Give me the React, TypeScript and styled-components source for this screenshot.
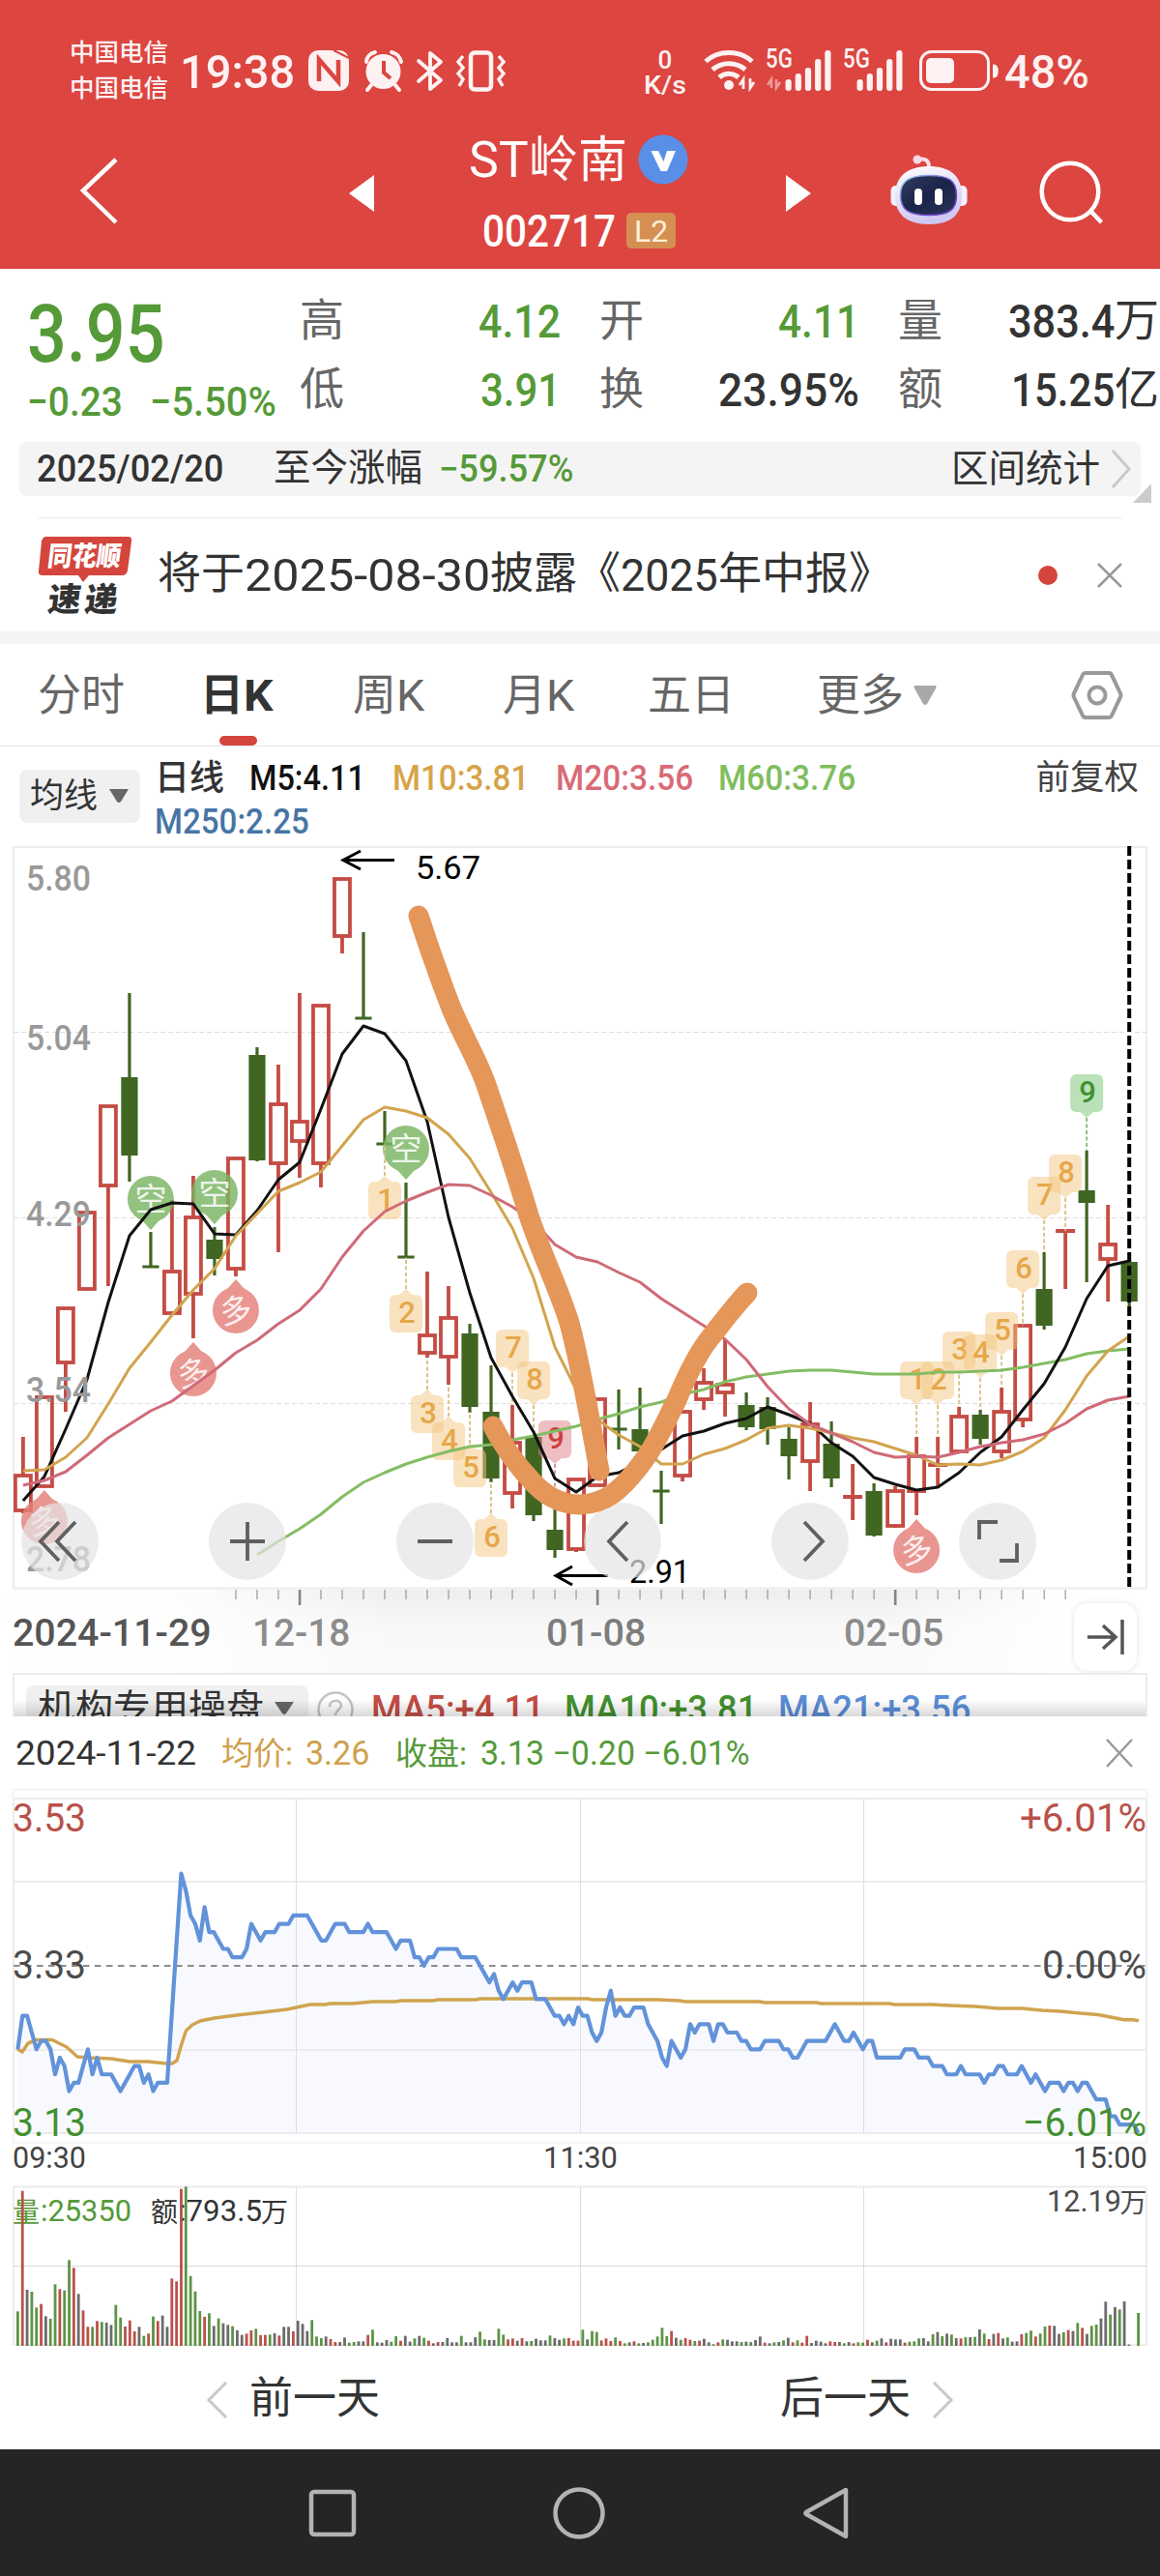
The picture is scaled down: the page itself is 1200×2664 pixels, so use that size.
/** @format */

import React, { useLayoutEffect, useRef, useState } from 'react';
import styled, { createGlobalStyle } from 'styled-components';

const RED = '#c44c44';
const GREEN = '#406622';
const UP = '#dc4540';
const DOWN = '#559a38';

/* ---------- daily K data ---------- */

const STEP = 22.005;
const kx = (i: number) => 23.9 + i * STEP;

// [colour, high, body top, body bottom, low]
type Candle = [string, number, number, number, number];

const candles: Candle[] = [
  ['r', 1486, 1526, 1562, 1565],
  ['r', 1445, 1445, 1537, 1537],
  ['r', 1353, 1353, 1409, 1460],
  ['r', 1254, 1254, 1333, 1335],
  ['r', 1144, 1144, 1226, 1330],
  ['g', 1027, 1114, 1195, 1221],
  ['g', 1274, 1310, 1310, 1310],
  ['r', 1241, 1315, 1358, 1358],
  ['r', 1216, 1259, 1338, 1384],
  ['g', 1269, 1282, 1302, 1318],
  ['r', 1198, 1198, 1312, 1320],
  ['g', 1083, 1091, 1200, 1200],
  ['r', 1101, 1142, 1203, 1295],
  ['r', 1027, 1160, 1180, 1218],
  ['r', 1040, 1040, 1203, 1228],
  ['r', 909, 909, 968, 986],
  ['g', 964, 1053, 1053, 1053],
  ['g', 1149, 1183, 1183, 1183],
  ['g', 1223, 1300, 1300, 1300],
  ['r', 1315, 1381, 1399, 1404],
  ['r', 1330, 1363, 1403, 1432],
  ['g', 1369, 1379, 1455, 1460],
  ['g', 1412, 1460, 1529, 1532],
  ['r', 1453, 1492, 1544, 1560],
  ['g', 1486, 1486, 1567, 1572],
  ['g', 1540, 1582, 1603, 1610],
  ['r', 1530, 1530, 1602, 1605],
  ['r', 1447, 1447, 1536, 1536],
  ['g', 1437, 1478, 1478, 1498],
  ['g', 1435, 1478, 1501, 1501],
  ['g', 1521, 1542, 1542, 1575],
  ['r', 1460, 1460, 1526, 1532],
  ['r', 1415, 1430, 1447, 1458],
  ['r', 1385, 1432, 1440, 1465],
  ['g', 1440, 1453, 1476, 1478],
  ['g', 1445, 1455, 1478, 1493],
  ['g', 1476, 1488, 1506, 1529],
  ['r', 1450, 1473, 1511, 1542],
  ['g', 1470, 1493, 1529, 1537],
  ['r', 1514, 1548, 1548, 1572],
  ['g', 1534, 1542, 1588, 1588],
  ['r', 1537, 1542, 1578, 1580],
  ['r', 1486, 1506, 1542, 1567],
  ['r', 1486, 1515, 1518, 1538],
  ['r', 1455, 1465, 1501, 1501],
  ['g', 1458, 1463, 1488, 1493],
  ['r', 1435, 1460, 1501, 1508],
  ['r', 1371, 1371, 1468, 1476],
  ['g', 1295, 1333, 1371, 1374],
  ['r', 1273, 1273, 1273, 1333],
  ['g', 1190, 1231, 1244, 1325],
  ['r', 1246, 1287, 1302, 1346],
  ['g', 1305, 1305, 1346, 1351],
];

const averages = [
  {
    color: '#84bd63',
    from: 11,
    ys: [1608, 1594, 1581, 1566, 1548, 1533, 1523, 1514, 1507, 1501, 1496, 1494, 1489, 1485, 1480, 1475, 1468, 1462, 1455, 1450, 1442, 1437, 1429, 1424, 1421, 1418, 1417, 1417, 1419, 1421, 1421, 1421, 1419, 1419, 1418, 1417, 1414, 1410, 1406, 1400, 1397, 1395],
  },
  {
    color: '#111',
    from: 0,
    ys: [1552, 1527, 1478, 1427, 1347, 1278, 1251, 1244, 1245, 1276, 1277, 1252, 1220, 1202, 1147, 1090, 1061, 1069, 1097, 1160, 1259, 1337, 1404, 1444, 1481, 1529, 1543, 1527, 1523, 1512, 1499, 1485, 1480, 1472, 1467, 1455, 1463, 1472, 1492, 1506, 1528, 1535, 1541, 1538, 1523, 1502, 1486, 1458, 1431, 1393, 1343, 1309, 1304],
  },
  {
    color: '#d2a44f',
    from: 0,
    ys: [1521, 1520, 1507, 1487, 1452, 1415, 1388, 1360, 1334, 1312, 1278, 1255, 1232, 1223, 1212, 1185, 1158, 1145, 1149, 1156, 1173, 1198, 1233, 1270, 1322, 1393, 1437, 1468, 1484, 1496, 1514, 1514, 1504, 1498, 1489, 1477, 1474, 1477, 1482, 1487, 1491, 1498, 1505, 1515, 1514, 1515, 1510, 1501, 1487, 1458, 1423, 1397, 1382],
  },
  {
    color: '#cf6a78',
    from: 0,
    ys: [1536, 1531, 1522, 1505, 1487, 1473, 1459, 1449, 1433, 1417, 1399, 1386, 1369, 1355, 1333, 1300, 1273, 1253, 1242, 1233, 1225, 1226, 1236, 1248, 1263, 1287, 1300, 1305, 1316, 1326, 1343, 1357, 1371, 1385, 1406, 1434, 1457, 1473, 1482, 1491, 1502, 1507, 1506, 1507, 1502, 1496, 1492, 1489, 1483, 1472, 1457, 1448, 1444],
  },
];

// [candle, top of box, digit, pointer side, dash end, tone]
type Tag = [number, number, string, 'up' | 'down', number, string];

const tags: Tag[] = [
  [17, 1222, '1', 'up', 1183, 'amber'],
  [18, 1339, '2', 'up', 1300, 'amber'],
  [19, 1443, '3', 'up', 1404, 'amber'],
  [20, 1471, '4', 'up', 1432, 'amber'],
  [21, 1499, '5', 'up', 1460, 'amber'],
  [22, 1571, '6', 'up', 1532, 'amber'],
  [23, 1375, '7', 'down', 1453, 'amber'],
  [24, 1408, '8', 'down', 1486, 'amber'],
  [25, 1469, '9', 'down', 1540, 'red'],
  [42, 1408, '1', 'down', 1486, 'amber'],
  [43, 1408, '2', 'down', 1486, 'amber'],
  [44, 1377, '3', 'down', 1455, 'amber'],
  [45, 1380, '4', 'down', 1458, 'amber'],
  [46, 1357, '5', 'down', 1435, 'amber'],
  [47, 1293, '6', 'down', 1371, 'amber'],
  [48, 1217, '7', 'down', 1295, 'amber'],
  [49, 1194, '8', 'down', 1273, 'amber'],
  [50, 1111, '9', 'down', 1190, 'green'],
];

const tones: { [k: string]: { box: string; text: string; dash: string } } = {
  amber: { box: '#f5c780', text: '#e6a74a', dash: '#dcc48a' },
  red: { box: '#dc8086', text: '#cc4040', dash: '#d09a9a' },
  green: { box: '#78c573', text: '#3f9130', dash: '#8cba82' },
};

// [candle, tip y, long?]
const bubbles: [number, number, boolean][] = [
  [6, 1272, false],
  [9, 1266, false],
  [18, 1220, false],
  [1, 1541, true],
  [8, 1388, true],
  [10, 1323, true],
  [42, 1571, true],
];

/* ---------- minute data: [minute, ticks below previous close] ---------- */

const ticks: [number, number][] = [
  [0, 10], [1, 6], [2, 6], [4, 10], [5, 9], [6, 9], [7, 10], [8, 13], [9, 11], [10, 12], [11, 15], [12, 14], [13, 14],
  [15, 10], [16, 13], [17, 11], [18, 13], [20, 13], [22, 15], [25, 12], [26, 12], [27, 14], [28, 13], [29, 15], [30, 14],
  [32, 14], [35, -11], [36, -9], [37, -6], [38, -5], [39, -3], [40, -7], [41, -4], [42, -4], [44, -2], [45, -2], [46, -1],
  [48, -1], [49, -2], [50, -5], [52, -3], [53, -4], [55, -4], [56, -5], [58, -5], [59, -6], [62, -6], [65, -3], [66, -3],
  [68, -5], [70, -5], [71, -4], [74, -4], [75, -5], [76, -4], [79, -4], [81, -2], [82, -3], [84, -3], [85, -1], [86, -1],
  [87, 0], [88, -1], [89, -1], [90, -2], [94, -2], [95, -1], [98, -1], [101, 2], [102, 1], [103, 3], [104, 4], [106, 2],
  [107, 3], [108, 2], [110, 2], [111, 4], [113, 4], [115, 6], [116, 6], [117, 7], [118, 6], [119, 7], [120, 5], [121, 6],
  [122, 6], [123, 8], [124, 9], [125, 8], [126, 5], [127, 3], [128, 6], [129, 5], [130, 6], [131, 6], [132, 5], [134, 5],
  [135, 7], [137, 9], [138, 11], [139, 12], [140, 9], [142, 11], [143, 10], [144, 7], [145, 8], [146, 7], [148, 7], [149, 9],
  [150, 7], [151, 7], [152, 8], [154, 8], [155, 9], [156, 9], [157, 10], [159, 10], [160, 9], [163, 9], [164, 10], [165, 10],
  [166, 11], [167, 11], [169, 9], [173, 9], [175, 7], [177, 9], [178, 9], [179, 8], [181, 10], [182, 9], [183, 9], [184, 11],
  [189, 11], [190, 10], [192, 10], [193, 11], [195, 11], [196, 12], [198, 12], [199, 13], [201, 13], [202, 12], [203, 13],
  [206, 13], [207, 14], [208, 13], [209, 13], [210, 12], [211, 12], [212, 13], [214, 13], [215, 12], [217, 14], [218, 13],
  [220, 15], [221, 14], [223, 14], [224, 15], [225, 14], [226, 14], [227, 15], [228, 14], [229, 14], [231, 16], [233, 16],
  [234, 18], [235, 18], [236, 19], [239, 19], [240, 20],
];

const avgLine =
  '18,2119 23,2122 29,2113 38,2109.5 54,2109.5 69,2117 80,2127 92,2128 115,2129 134,2132 153,2132 172,2134 178,2134 183,2131 187.5,2115 192.5,2100 199,2094 207,2090 222,2087 245,2084 272,2081 297,2078 321,2073 337,2073 341,2072 365,2072 386,2070 409,2070 415,2069 448,2069 453,2068 492,2068 497,2067 608,2067 613,2068 680,2068 703,2069 709,2070 786,2070 791,2071 845,2071 849,2072 920,2072 925,2073 964,2073 983,2074 1009,2075 1032,2077 1057,2077 1078,2079 1097,2080 1117,2082 1136,2083.5 1163,2088.7 1172,2088.7 1178,2089.7';

const mx = (m: number) => 18.4 + m * 4.83;
const my = (t: number) => 2032.8 + t * 8.65;

// one entry a minute from 09:30: colour and top of the bar on a 557-unit scale
const volumes =
  'g450 r76 d383 g389 g438 r427 d465 g473 g366 r381 g385 g291 r315 d396 r447 r498 g498 r480 g483 d485 d492 g430 g469 r497 r478 r512 d498 g526 r519 g466 r480 d463 d498 r348 r357 r70 g63 g340 g388 g449 r467 g456 d495 g472 d487 d492 g496 d509 d523 r519 r509 g504 r524 r523 g522 d518 r525 d498 d498 r512 d479 d489 d511 g477 g528 g533 d528 r536 r545 d545 d531 g547 g545 d543 d543 r523 g507 d546 d547 d539 g544 g527 r541 d526 d544 g534 d526 g532 r541 d549 r545 d545 d533 d546 d546 g526 d546 d546 d530 g513 g537 d539 d539 g504 g522 r537 r534 d541 r533 d543 g542 d535 d540 d540 g525 d533 d538 g534 r533 r541 r541 g507 d537 g511 g514 r540 r534 r542 g531 r542 g549 d546 r543 g549 d548 g546 g538 g528 g501 g527 r511 d532 g538 r533 r538 g542 r541 d535 d546 g552 r546 g537 d538 d543 d543 g545 d544 g545 d539 d528 r547 d549 g546 d545 g540 d532 r546 g540 r547 r526 d548 d541 d544 d549 r543 r545 d545 g549 d545 r549 g546 g547 r538 d546 g541 d534 r546 d535 d537 d537 r547 g544 g543 g534 d533 d543 g521 d514 g527 d519 g522 d533 r534 g530 d530 g529 d506 g519 r536 d520 r517 d534 g531 d544 d543 r521 g517 g510 r528 g519 g497 r494 d495 d520 g515 r508 d511 g486 r501 d520 g495 g491 d472 d420 g460 d437 g444 d419 d553 n557 g455';

const volumeColors: { [k: string]: string } = { r: '#b9514a', g: '#5d9446', d: '#6b6b6b', n: 'none' };

/* ---------- text squeezed to the narrow numerals of the app ---------- */

interface IFit {
  w: number;
  children: React.ReactNode;
}

const Fit = ({ w, children }: IFit) => {
  const ref = useRef<HTMLSpanElement>(null);
  const [scale, setScale] = useState(1);

  useLayoutEffect(() => {
    if (ref.current) setScale(w / ref.current.offsetWidth);
  }, [w]);

  return (
    <FitBox $w={w}>
      <FitText ref={ref} style={{ transform: `scaleX(${scale})` }}>
        {children}
      </FitText>
    </FitBox>
  );
};

/* ---------- header ---------- */

const StatusIcons = () => (
  <svg width="210" height="46" viewBox="318 50 210 46" fill="none">
    <rect x="320" y="52" width="42" height="42" rx="10" fill="#fdf1f1" />
    <path d="M331 84V61.5L351 84.5V62" stroke={UP} strokeWidth="4.5" />
    <path d="M322 94L326 94M346 52L362 60" stroke={UP} strokeWidth="2" />
    <circle cx="397.500" cy="74" r="18" fill="#fdf1f1" />
    <path d="M398 63V75L405 81" stroke={UP} strokeWidth="4" />
    <path d="M380 64C380 59 384 55 389 54M406 54C411 55 415 59 416 64M385 88L381 93M410 88L414 93" stroke="#fdf1f1" strokeWidth="4" strokeLinecap="round" />
    <path d="M434 63L457 83L446 92V55L457 64L434 84" stroke="#fdf1f1" strokeWidth="3.800" strokeLinejoin="round" strokeLinecap="round" />
    <rect x="488" y="54.500" width="21" height="38" rx="4" stroke="#fdf1f1" strokeWidth="4.500" />
    <path d="M480 58L475 64L480 70L475 76L480 82L476 89M517 58L522 64L517 70L522 76L517 82L521 89" stroke="#fdf1f1" strokeWidth="3.500" />
  </svg>
);

const WifiIcon = () => (
  <svg width="56" height="44" viewBox="728 51 56 44" fill="none" stroke="#fdf1f1" strokeWidth="5">
    <path d="M731 63.500C744 51.500 766 51.500 779 63.500M738 72C748 63.500 762 63.500 772 72M745 80C751 75 759 75 765 80" />
    <circle cx="755" cy="88" r="5" fill="#fdf1f1" stroke="none" />
    <path d="M770 92V82L766 88M777 81V91L781 85" strokeWidth="2.800" />
  </svg>
);

const Signal = ({ faded }: { faded?: boolean }) => (
  <SignalBox>
    <SignalLabel>
      <Fit w={28}>5G</Fit>
    </SignalLabel>
    <svg width="70" height="44" viewBox="0 0 70 44">
      {faded && <path d="M6 40V31L2 37M11 31V40L15 34" stroke="#fdf1f1" strokeWidth="2.500" opacity="0.5" fill="none" />}
      {[12, 18, 24, 33, 42].map((h, i) => (
        <rect key={h} x={(faded ? 20.5 : 14.5) + i * 10.2} y={43 - h} width="6.200" height={h} rx="3" fill="#fdf1f1" />
      ))}
    </svg>
  </SignalBox>
);

const Battery = () => (
  <svg width="84" height="44" viewBox="951 51 84 44" fill="none">
    <rect x="953.500" y="53.500" width="70" height="39" rx="11" stroke="#fdf1f1" strokeWidth="3" />
    <rect x="959" y="60" width="29" height="26" rx="5" fill="#fdf1f1" />
    <path d="M1029 67.500C1034 68 1034 79 1029 79.500Z" fill="#fdf1f1" stroke="#fdf1f1" strokeWidth="2" />
  </svg>
);

const Robot = () => (
  <svg width="80" height="74" viewBox="0 0 80 74">
    <defs>
      <linearGradient id="shell" x1="0" y1="0" x2="0.300" y2="1">
        <stop offset="0" stopColor="#fff" />
        <stop offset="1" stopColor="#cfc8f2" />
      </linearGradient>
      <linearGradient id="visor" x1="0" y1="0" x2="1" y2="1">
        <stop offset="0" stopColor="#333d60" />
        <stop offset="0.500" stopColor="#1a2448" />
        <stop offset="1" stopColor="#2c3558" />
      </linearGradient>
      <linearGradient id="rim" x1="0" y1="0" x2="1" y2="1">
        <stop offset="0" stopColor="#9adcf6" />
        <stop offset="0.500" stopColor="#7a58d0" />
        <stop offset="1" stopColor="#6e3ac8" />
      </linearGradient>
    </defs>
    <path d="M29 6C36 4 40 7 40 14" stroke="#fbdfe6" strokeWidth="4" fill="none" />
    <circle cx="28" cy="6" r="4.500" fill="#f9d9e6" />
    <rect x="0.500" y="33" width="12" height="21" rx="5" fill="#f6eefc" />
    <rect x="67.500" y="33" width="12" height="21" rx="5" fill="#f6eefc" />
    <path d="M40 13C62 13 74 23 74 43C74 62 64 73 40 73C16 73 5 62 5 43C5 23 18 13 40 13Z" fill="url(#shell)" />
    <path d="M40 22.500C61 22.500 68.500 28 68.500 43C68.500 58 61 63.500 40 63.500C19 63.500 10.500 58 10.500 43C10.500 28 19 22.500 40 22.500Z" fill="url(#visor)" stroke="url(#rim)" strokeWidth="1.500" />
    <rect x="25" y="36" width="8" height="17" rx="3.800" fill="#fff" />
    <rect x="46" y="36" width="8" height="17" rx="3.800" fill="#fff" />
  </svg>
);

const Header = () => (
  <HeaderBox>
    <StatusBar>
      <Carriers>
        <span>中国电信</span>
        <span>中国电信</span>
      </Carriers>
      <Clock>
        <Fit w={119}>19:38</Fit>
      </Clock>
      <StatusIcons />
      <Speed>
        <Fit w={15}>0</Fit>
        <Fit w={44}>K/s</Fit>
      </Speed>
      <WifiIcon />
      <Signal faded />
      <Signal />
      <BatterySlot>
        <Battery />
      </BatterySlot>
      <Percent>
        <Fit w={88}>48%</Fit>
      </Percent>
    </StatusBar>
    <NavBar>
      <svg width="44" height="74" viewBox="0 0 44 74" fill="none">
        <path d="M39 5L5 37L39 70" stroke="#fff" strokeWidth="4.500" />
      </svg>
      <PrevStock width="26" height="38" viewBox="0 0 26 38">
        <path d="M26 0V38L0 19Z" fill="#fff" />
      </PrevStock>
      <TitleBlock>
        <Title>
          <Fit w={62}>ST</Fit>
          <span>岭南</span>
          <Verified width="52" height="52" viewBox="0 0 52 52">
            <circle cx="26" cy="26" r="25.500" fill="#5a8fe8" />
            <path d="M13.500 17H21L26.500 28L30 17H39L30 38H23.500Z" fill="#fff" />
          </Verified>
        </Title>
        <Code>
          <Fit w={138}>002717</Fit>
          <Level>
            <Fit w={35}>L2</Fit>
          </Level>
        </Code>
      </TitleBlock>
      <NextStock width="26" height="38" viewBox="0 0 26 38">
        <path d="M0 0V38L26 19Z" fill="#fff" />
      </NextStock>
      <RobotSlot>
        <Robot />
      </RobotSlot>
      <svg width="70" height="70" viewBox="0 0 70 70" fill="none" stroke="#fff">
        <circle cx="34" cy="33" r="29.300" strokeWidth="4.500" />
        <path d="M55 53L66.500 65" strokeWidth="4.500" />
      </svg>
    </NavBar>
  </HeaderBox>
);

/* ---------- quote ---------- */

const Quote = () => (
  <QuoteBox>
    <PriceCol>
      <Price>
        <Fit w={143}>3.95</Fit>
      </Price>
      <Change>
        <Fit w={99}>−0.23</Fit>
        <Fit w={131}>−5.50%</Fit>
      </Change>
    </PriceCol>
    <PairCol $w={269}>
      <Pair $color={DOWN}>
        <label>高</label>
        <Fit w={85}>4.12</Fit>
      </Pair>
      <Pair $color={DOWN}>
        <label>低</label>
        <Fit w={83}>3.91</Fit>
      </Pair>
    </PairCol>
    <PairCol $w={268}>
      <Pair $color={DOWN}>
        <label>开</label>
        <Fit w={84}>4.11</Fit>
      </Pair>
      <Pair $color="#333">
        <label>换</label>
        <Fit w={146}>23.95%</Fit>
      </Pair>
    </PairCol>
    <PairCol $w={269}>
      <Pair $color="#333">
        <label>量</label>
        <Fit w={110}>383.4</Fit>
        <b>万</b>
      </Pair>
      <Pair $color="#333">
        <label>额</label>
        <Fit w={107}>15.25</Fit>
        <b>亿</b>
      </Pair>
    </PairCol>
  </QuoteBox>
);

const SinceBar = () => (
  <Since>
    <Fit w={193}>2025/02/20</Fit>
    <SinceLabel>至今涨幅</SinceLabel>
    <SinceValue>
      <Fit w={139}>−59.57%</Fit>
    </SinceValue>
    <SinceLink>区间统计</SinceLink>
    <svg width="24" height="42" viewBox="0 0 24 42" fill="none">
      <path d="M3 2L20 21L3 40" stroke="#c9c9c9" strokeWidth="3" />
    </svg>
    <Corner />
  </Since>
);

const News = () => (
  <NewsRow>
    <NewsLogo width="98" height="82" viewBox="0 0 98 82">
      <path d="M9 1H93Q98 1 97 6L93 36Q92 41 87 41H53L47 48L42 41H5Q0 41 1 36L4 6Q5 1 9 1Z" fill="#d4453d" />
      <g transform="skewX(-7)" fontFamily="'Noto Sans CJK SC', sans-serif" fontWeight="900">
        <text x="13" y="31" fontSize="28" fill="#fff" textLength="76" lengthAdjust="spacingAndGlyphs">同花顺</text>
        <text x="19" y="78" fontSize="34" fill="#333" textLength="72" lengthAdjust="spacing">速递</text>
      </g>
    </NewsLogo>
    <NewsText>
      <span>将于</span>
      <Fit w={254}>2025-08-30</Fit>
      <span>披露《</span>
      <Fit w={101}>2025</Fit>
      <span>年中报》</span>
    </NewsText>
    <Dot />
    <svg width="28" height="28" viewBox="0 0 28 28">
      <path d="M2 2L26 26M26 2L2 26" stroke="#999" strokeWidth="2.500" />
    </svg>
  </NewsRow>
);

const Tabs = () => (
  <TabBar>
    <Tab $w={168}>分时</Tab>
    <Tab $w={158} $active>
      日<Fit w={31}>K</Fit>
    </Tab>
    <Tab $w={155}>
      周<Fit w={29}>K</Fit>
    </Tab>
    <Tab $w={150}>
      月<Fit w={29}>K</Fit>
    </Tab>
    <Tab $w={175}>五日</Tab>
    <Tab $w={128}>
      更多
      <svg width="26" height="22" viewBox="0 0 26 22">
        <path d="M2 1H24Q25 2 24 4L15 20Q13 22 11 20L2 4Q1 2 2 1Z" fill="#a8a8a8" />
      </svg>
    </Tab>
    <Gear width="54" height="52" viewBox="0 0 54 52" fill="none" stroke="#999" strokeWidth="4">
      <path d="M15 3H39Q41 3 42 5L51 24Q52 26 51 28L42 47Q41 49 39 49H15Q13 49 12 47L3 28Q2 26 3 24L12 5Q13 3 15 3Z" />
      <circle cx="27" cy="26" r="8.500" />
    </Gear>
  </TabBar>
);

const Legend = () => (
  <LegendBar>
    <Picker>
      均线
      <svg width="20" height="15" viewBox="0 0 20 15">
        <path d="M0 0H20L12 13Q10 15 8 13Z" fill="#666" />
      </svg>
    </Picker>
    <LegendItems>
      <LegendRow>
        <LegendText $color="#333" $gap={26}>日线</LegendText>
        <LegendText $color="#111" $gap={28}>
          <Fit w={120}>M5:4.11</Fit>
        </LegendText>
        <LegendText $color="#d6a449" $gap={28}>
          <Fit w={141}>M10:3.81</Fit>
        </LegendText>
        <LegendText $color="#d96a76" $gap={26}>
          <Fit w={142}>M20:3.56</Fit>
        </LegendText>
        <LegendText $color="#80bd5e" $gap={0}>
          <Fit w={142}>M60:3.76</Fit>
        </LegendText>
      </LegendRow>
      <LegendRow>
        <LegendText $color="#4675a5" $gap={0}>
          <Fit w={160}>M250:2.25</Fit>
        </LegendText>
      </LegendRow>
    </LegendItems>
    <Adjust>前复权</Adjust>
  </LegendBar>
);

/* ---------- daily K chart ---------- */

const CandleMark = ({ c, i }: { c: Candle; i: number }) => {
  const [kind, high, top, bottom, low] = c;
  const x = kx(i);
  const flat = bottom - top < 5;

  if (kind === 'g') {
    return (
      <g fill={GREEN}>
        <rect x={x - 1.6} y={high} width="3.200" height={low - high + 1} />
        <rect x={x - 8.6} y={flat ? top - 1.5 : top} width="17.200" height={flat ? 3 : bottom - top} />
      </g>
    );
  }
  return (
    <g stroke={RED} strokeWidth="3.800" fill="none">
      <path d={`M${x} ${high}V${top}M${x} ${bottom}V${low}`} />
      {flat ? <path d={`M${x - 10} ${top}H${x + 10}`} strokeWidth="4" /> : <rect x={x - 8} y={top} width="16" height={bottom - top} />}
    </g>
  );
};

const TagMark = ({ t }: { t: Tag }) => {
  const [i, y, digit, side, end, tone] = t;
  const x = kx(i);
  const c = tones[tone];
  const tip = side === 'up' ? `M${x - 7} ${y}L${x} ${y - 6}L${x + 7} ${y}Z` : `M${x - 7} ${y + 39}L${x} ${y + 45}L${x + 7} ${y + 39}Z`;
  const from = side === 'up' ? y - 6 : y + 45;

  return (
    <g>
      <path d={`M${x} ${from}V${end}`} stroke={c.dash} strokeWidth="2" strokeDasharray="4 2.500" />
      <g fill={c.box} opacity="0.5">
        <rect x={x - 17} y={y} width="34" height="39" rx="6" />
        <path d={tip} />
      </g>
      <text x={x + 1} y={y + 29} fontSize="31" fontWeight="500" fill={c.text} textAnchor="middle">
        {digit}
      </text>
    </g>
  );
};

const Bubble = ({ i, tip, long }: { i: number; tip: number; long: boolean }) => {
  const x = kx(i);
  const s = long ? 1 : -1;
  const cy = tip + s * 32;

  return (
    <g>
      <g fill={long ? '#e57f7a' : '#7ab562'} opacity="0.82">
        <circle cx={x} cy={cy} r="24" />
        <path d={`M${x} ${tip}L${x + 9} ${cy - s * 22}H${x - 9}Z`} />
      </g>
      <text x={x} y={cy + 12} fontSize="33" fill="#fff" opacity="0.85" textAnchor="middle" transform={`rotate(${long ? -10 : 0} ${x} ${cy})`}>
        {long ? '多' : '空'}
      </text>
    </g>
  );
};

const scaleLabels: [string, number][] = [
  ['5.80', 921],
  ['5.04', 1086],
  ['4.29', 1268],
  ['3.54', 1450],
  ['2.78', 1625],
];

const KChart = () => (
  <KBox>
    <Plot width="1200" height="769" viewBox="0 875 1200 769" fill="none">
      <rect x="14" y="876" width="1172" height="766.500" stroke="#ececec" strokeWidth="2" />
      <path d="M14 1067.500H1186M14 1259.500H1186M14 1451.500H1186" stroke="#dedede" strokeDasharray="5 3" />
      {candles.map((c, i) => (
        <CandleMark key={i} c={c} i={i} />
      ))}
      {bubbles.map(([i, tip, long]) => (
        <Bubble key={i} i={i} tip={tip} long={long} />
      ))}
      {tags.map(t => (
        <TagMark key={t[0]} t={t} />
      ))}
      {averages.map(a => (
        <polyline key={a.color} points={a.ys.map((y, n) => `${kx(a.from + n)},${y}`).join(' ')} stroke={a.color} strokeWidth="3" strokeLinejoin="round" />
      ))}
      {scaleLabels.map(([text, y]) => (
        <text key={text} x="27" y={y} fontSize="37.500" fontWeight="500" fill="#999" textLength="67" lengthAdjust="spacingAndGlyphs">
          {text}
        </text>
      ))}
      <path d="M408 889.500H356M373 880L355 889.500L373 899M629 1629.500H576M592 1620L575 1629.500L592 1639" stroke="#000" strokeWidth="3" />
      <text x="430" y="909" fontSize="33.500" fill="#000" textLength="67" lengthAdjust="spacingAndGlyphs">5.67</text>
      <text x="651" y="1637" fontSize="33.500" fill="#000" textLength="63" lengthAdjust="spacingAndGlyphs">2.91</text>
      <path d="M1168.200 875V1642" stroke="#000" strokeWidth="4" strokeDasharray="10 4" />
    </Plot>
    <Controls>
      {[
        'M39 20L20 40L39 60M56 20L37 40L56 60',
        'M22 40H58M40 20V60',
        'M22 40H58',
        'M45 20L26 40L45 60',
        'M34 20L53 40L34 60',
        'M21 38V20H40M60 42V60H42',
      ].map(d => (
        <Control key={d}>
          <svg width="80" height="80" viewBox="0 0 80 80" fill="none">
            <path d={d} stroke="#606060" strokeWidth="3.800" />
          </svg>
        </Control>
      ))}
    </Controls>
    <Scribble width="1200" height="769" viewBox="0 875 1200 769" fill="none">
      <g stroke="#e59659" strokeWidth="21" strokeLinecap="round" strokeLinejoin="round">
        <path d="M433 947C443 978 455 1012 467 1043C482 1078 494 1096 503 1122C517 1163 532 1207 547 1257C561 1299 577 1330 589 1368C600 1408 609 1462 620 1521" />
        <path d="M510 1475C524 1502 536 1516 547 1528C564 1549 582 1556 600 1556C625 1555 642 1544 669 1506C682 1487 692 1463 700 1448C712 1419 722 1399 735 1383C750 1364 762 1348 773 1337" />
      </g>
    </Scribble>
  </KBox>
);

const Axis = () => (
  <AxisBox>
    <svg width="1200" height="18" viewBox="0 0 1200 18">
      {Array.from({ length: 40 }, (_, n) => n + 10).map(i => (
        <rect key={i} x={kx(i) - ([13, 27, 41].includes(i) ? 1.2 : 0.5)} y="0" width={[13, 27, 41].includes(i) ? 2.6 : 1} height={[13, 27, 41].includes(i) ? 16 : 10} fill="#858585" />
      ))}
    </svg>
    <AxisRow>
      <AxisDate $w={248} $color="#555">
        <Fit w={206}>2024-11-29</Fit>
      </AxisDate>
      <AxisDate $w={304} $color="#8c8c8c">
        <Fit w={101}>12-18</Fit>
      </AxisDate>
      <AxisDate $w={308} $color="#7d7d7d">
        <Fit w={103}>01-08</Fit>
      </AxisDate>
      <AxisDate $w={238} $color="#8c8c8c">
        <Fit w={103}>02-05</Fit>
      </AxisDate>
      <LatestButton>
        <svg width="42" height="40" viewBox="0 0 42 40" fill="none">
          <path d="M2 20H31M18 8L31 20L18 32" stroke="#555" strokeWidth="3.500" />
          <path d="M38 2V38" stroke="#555" strokeWidth="3.500" />
        </svg>
      </LatestButton>
    </AxisRow>
  </AxisBox>
);

const Indicator = () => (
  <IndicatorBox>
    <IndicatorPicker>
      机构专用操盘
      <svg width="20" height="14" viewBox="0 0 20 14">
        <path d="M0 0H20L12 12Q10 14 8 12Z" fill="#666" />
      </svg>
    </IndicatorPicker>
    <Help width="40" height="40" viewBox="0 0 40 40" fill="none" stroke="#c4c4c4" strokeWidth="2.500">
      <circle cx="20" cy="20" r="17.500" />
      <path d="M14 17C14 9 26 9 26 16C26 20 20 20 20 26M20 29V32" />
    </Help>
    <IndicatorText $color="#c44c44" $gap={21}>
      <Fit w={179}>MA5:+4.11</Fit>
    </IndicatorText>
    <IndicatorText $color="#43902f" $gap={22}>
      <Fit w={199}>MA10:+3.81</Fit>
    </IndicatorText>
    <IndicatorText $color="#5a8dd8" $gap={0}>
      <Fit w={199}>MA21:+3.56</Fit>
    </IndicatorText>
    <Fade />
  </IndicatorBox>
);

/* ---------- one day sheet ---------- */

const linePath = ticks.map(([m, t]) => `${mx(m)},${my(t)}`).join(' ');

const DaySheet = () => (
  <Sheet>
    <SheetHead>
      <SheetText $color="#333" $gap={26}>
        <Fit w={187}>2024-11-22</Fit>
      </SheetText>
      <SheetLabel $color="#d0a04c" $gap={13}>
        均价:
      </SheetLabel>
      <SheetText $color="#d0a04c" $gap={27}>
        <Fit w={66}>3.26</Fit>
      </SheetText>
      <SheetLabel $color={DOWN} $gap={14}>
        收盘:
      </SheetLabel>
      <SheetText $color={DOWN} $gap={0}>
        <Fit w={279}>3.13 −0.20 −6.01%</Fit>
      </SheetText>
      <Close width="30" height="34" viewBox="0 0 30 34">
        <path d="M2 3L28 31M28 3L2 31" stroke="#999" strokeWidth="2.500" />
      </Close>
    </SheetHead>
    <Plot width="1200" height="404" viewBox="0 1846 1200 404" fill="none" fontSize="40">
      <path d="M13.500 1860V1850.500H1186.500V1860M13.500 2207V2216H1186.500V2207" stroke="#f4f4f4" strokeWidth="2" />
      <polygon points={`${mx(0)},2206 ${linePath} ${mx(240)},2206`} fill="#f7f9fe" />
      <path d="M14 1860H1186M14 1946H1186M14 2120H1186M14 2206H1186M14 1860V2206M1186 1860V2206" stroke="#ececee" strokeWidth="2" />
      <path d="M306.500 1860V2206M600.500 1860V2206M893.500 1860V2206" stroke="#dfdfe1" />
      <path d="M14 2033H1186" stroke="#8c8c8c" strokeWidth="2" strokeDasharray="6.500 5.500" />
      <polyline points={avgLine} stroke="#d0a44f" strokeWidth="3.500" strokeLinejoin="round" />
      <polyline points={linePath} stroke="#6293da" strokeWidth="4.200" strokeLinejoin="round" />
      <text x="13" y="1893.500" fill="#b9514a" textLength="76" lengthAdjust="spacingAndGlyphs">3.53</text>
      <text x="13" y="2046" fill="#4c4c4c" textLength="76" lengthAdjust="spacingAndGlyphs">3.33</text>
      <text x="13" y="2208.500" fill="#43902f" textLength="76" lengthAdjust="spacingAndGlyphs">3.13</text>
      <text x="1055" y="1893.500" fill="#b9514a" textLength="131" lengthAdjust="spacingAndGlyphs">+6.01%</text>
      <text x="1078" y="2046" fill="#4c4c4c" textLength="108" lengthAdjust="spacingAndGlyphs">0.00%</text>
      <text x="1058" y="2208.500" fill="#43902f" textLength="128" lengthAdjust="spacingAndGlyphs">−6.01%</text>
      <g fontSize="31" fill="#444">
        <text x="13" y="2242" textLength="76" lengthAdjust="spacingAndGlyphs">09:30</text>
        <text x="562" y="2242" textLength="77" lengthAdjust="spacingAndGlyphs">11:30</text>
        <text x="1110" y="2242" textLength="77" lengthAdjust="spacingAndGlyphs">15:00</text>
      </g>
    </Plot>
    <Plot width="1200" height="176" viewBox="0 2250 1200 176" fill="none">
      <path d="M14 2261.500H1186M14 2261V2426M1186 2261V2426M14 2425H1186" stroke="#ececec" strokeWidth="2" />
      <path d="M306.500 2261V2426M600.500 2261V2426M893.500 2261V2426M14 2343.500H1186" stroke="#dcdcdc" />
      <g fontSize="31">
        <text x="13" y="2298" fontSize="28" fill={DOWN}>量</text>
        <text x="42" y="2297" fill={DOWN} textLength="94" lengthAdjust="spacingAndGlyphs">:25350</text>
        <text x="156" y="2298" fontSize="28" fill="#333">额</text>
        <text x="185" y="2297" fill="#333" textLength="86" lengthAdjust="spacingAndGlyphs">:793.5</text>
        <text x="270" y="2298" fontSize="28" fill="#333">万</text>
        <text x="1083" y="2287" fill="#4c4c4c" textLength="77" lengthAdjust="spacingAndGlyphs">12.19</text>
        <text x="1158.500" y="2288" fontSize="28" fill="#4c4c4c">万</text>
      </g>
      {volumes.split(' ').map((v, m) => {
        const h = (557 - Number(v.slice(1))) / 3;
        return <rect key={m} x={mx(m) - 1.4} y={2426 - h} width="2.800" height={h} fill={volumeColors[v[0]]} />;
      })}
    </Plot>
    <Pager>
      <PageLink>
        <svg width="24" height="40" viewBox="0 0 24 40" fill="none">
          <path d="M21 2L3 20L21 38" stroke="#c8c8c8" strokeWidth="3" />
        </svg>
        <span>前一天</span>
      </PageLink>
      <PageLink>
        <span>后一天</span>
        <svg width="24" height="40" viewBox="0 0 24 40" fill="none">
          <path d="M3 2L21 20L3 38" stroke="#c8c8c8" strokeWidth="3" />
        </svg>
      </PageLink>
    </Pager>
  </Sheet>
);

const SystemBar = () => (
  <SystemBox>
    <svg width="52" height="56" viewBox="0 0 52 56" fill="none" stroke="#b3b3b3" strokeWidth="4.500">
      <rect x="5" y="6" width="44" height="44" rx="3" />
    </svg>
    <svg width="56" height="56" viewBox="0 0 56 56" fill="none" stroke="#b3b3b3" strokeWidth="4.500">
      <circle cx="28" cy="28" r="24.500" />
    </svg>
    <svg width="52" height="56" viewBox="0 0 52 56" fill="none" stroke="#b3b3b3" strokeWidth="4.500" strokeLinejoin="round">
      <path d="M46 4V52L5 29Q4 28 5 27Z" />
    </svg>
  </SystemBox>
);

const App = () => (
  <>
    <Global />
    <Screen>
      <Header />
      <Quote />
      <SinceBar />
      <Rule />
      <News />
      <Strip />
      <Tabs />
      <Legend />
      <KChart />
      <Axis />
      <Indicator />
      <DaySheet />
      <SystemBar />
    </Screen>
  </>
);

const Global = createGlobalStyle`
  * {
    box-sizing: border-box;
  }
  body {
    margin: 0;
    background: #fff;
    font-family: Roboto, 'Noto Sans CJK SC', sans-serif;
  }
  svg {
    display: block;
    flex: none;
  }
`;

const Screen = styled.div`
  width: 1200px;
  height: 2664px;
  overflow: hidden;
  background: #fff;
  line-height: 1;
  white-space: nowrap;
`;

const FitBox = styled.span<{ $w: number }>`
  display: block;
  flex: none;
  width: ${p => p.$w}px;
`;

const FitText = styled.span`
  display: inline-block;
  white-space: pre;
  transform-origin: left center;
`;

const HeaderBox = styled.header`
  height: 278px;
  background: ${UP};
  color: #fff;
`;

const StatusBar = styled.div`
  display: flex;
  align-items: center;
  height: 130px;
  padding: 16px 0 0 72px;
  color: #fdf1f1;
  font-weight: 500;
`;

const Carriers = styled.div`
  display: flex;
  flex-direction: column;
  justify-content: space-between;
  width: 114px;
  height: 63px;
  font-size: 25.500px;
`;

const Clock = styled.div`
  width: 131px;
  padding-top: 2px;
  font-size: 49px;
`;

const Speed = styled.div`
  display: flex;
  flex-direction: column;
  align-items: center;
  justify-content: space-between;
  width: 44px;
  height: 49px;
  margin: 0 17px 0 139px;
  font-size: 26px;
`;

const SignalBox = styled.div`
  display: flex;
  position: relative;
  width: 70px;
  margin-left: 9px;

  & + & {
    margin-left: 10px;
  }
`;

const SignalLabel = styled.div`
  position: absolute;
  top: -3px;
  left: 0;
  font-size: 27px;
`;

const BatterySlot = styled.div`
  margin-left: 8px;
`;

const Percent = styled.div`
  margin: 3px 0 0 5px;
  font-size: 48px;
`;

const NavBar = styled.nav`
  display: flex;
  height: 148px;
  padding-left: 81px;

  & > svg:first-child {
    margin-top: 30px;
  }
  & > svg:last-child {
    margin: 35px 0 0 72px;
  }
`;

const PrevStock = styled.svg`
  margin: 51px 0 0 236px;
`;

const NextStock = styled.svg`
  margin: 51px 0 0 0;
`;

const TitleBlock = styled.div`
  width: 426px;
  padding-left: 98px;
`;

const Title = styled.div`
  display: flex;
  align-items: center;
  height: 70px;
  font-size: 51px;
`;

const Verified = styled.svg`
  margin-left: 11px;
`;

const Code = styled.div`
  display: flex;
  align-items: center;
  height: 78px;
  padding-left: 14px;
  font-size: 46px;
  font-weight: 500;
`;

const Level = styled.div`
  display: flex;
  align-items: center;
  justify-content: center;
  width: 51px;
  height: 37px;
  margin: -1px 0 0 11px;
  border-radius: 5px;
  background: #d58f52;
  color: #fdeed8;
  font-size: 32px;
  font-weight: 400;
`;

const RobotSlot = styled.div`
  margin: 29px 0 0 82px;
`;

const QuoteBox = styled.section`
  display: flex;
  gap: 41px;
  height: 179px;
  padding-left: 28px;
`;

const PriceCol = styled.div`
  width: 242px;
  padding-top: 26px;
  color: ${DOWN};
`;

const Price = styled.div`
  height: 84px;
  font-size: 83px;
  font-weight: 500;
`;

const Change = styled.div`
  display: flex;
  gap: 28px;
  margin-top: 7px;
  font-size: 42px;
  font-weight: 500;
`;

const PairCol = styled.div<{ $w: number }>`
  width: ${p => p.$w}px;
  padding-top: 19px;
`;

const Pair = styled.div<{ $color: string }>`
  display: flex;
  align-items: center;
  height: 71px;
  color: ${p => p.$color};
  font-size: 48px;
  font-weight: 500;

  label {
    margin: -4px auto 0 -1px;
    color: #666;
    font-size: 46px;
    font-weight: 400;
  }
  b {
    margin-top: -4px;
    font-size: 46px;
    font-weight: 400;
  }
`;

const Since = styled.section`
  display: flex;
  position: relative;
  align-items: center;
  height: 56px;
  margin: 0 20px;
  padding-left: 18px;
  border-radius: 8px;
  background: #f4f4f4;
  color: #333;
  font-size: 38px;
  font-weight: 500;
`;

const SinceLabel = styled.span`
  margin: -2px 0 0 52px;
  font-size: 38.500px;
  font-weight: 400;
`;

const SinceValue = styled.span`
  margin-left: 17px;
  color: ${DOWN};
`;

const SinceLink = styled.span`
  margin: 0 10px 0 auto;
  font-size: 38.500px;
  font-weight: 400;

  & + svg {
    margin-right: 8px;
  }
`;

const Corner = styled.i`
  position: absolute;
  right: -11px;
  bottom: -7px;
  border-left: 19px solid transparent;
  border-bottom: 20px solid #ccc;
`;

const Rule = styled.div`
  height: 1px;
  margin: 22px 39px 0;
  background: #ebebeb;
`;

const NewsRow = styled.section`
  display: flex;
  align-items: center;
  height: 117px;
  padding: 0 38px 0 39px;
`;

const NewsLogo = styled.svg`
  overflow: visible;
`;

const NewsText = styled.div`
  display: flex;
  flex: 1;
  align-items: center;
  padding-left: 26px;
  color: #333;
  font-size: 47px;

  & > span:nth-child(odd) {
    margin-top: -2px;
    font-size: 45px;
  }
`;

const Dot = styled.i`
  width: 20px;
  height: 20px;
  margin-right: 40px;
  border-radius: 50%;
  background: #d4453d;
`;

const Strip = styled.div`
  height: 13px;
  background: #f4f4f4;
`;

const TabBar = styled.div`
  display: flex;
  height: 106px;
  padding-left: 39px;
  border-bottom: 1px solid #e6e6e6;
`;

const Tab = styled.div<{ $w: number; $active?: boolean }>`
  display: flex;
  position: relative;
  align-items: center;
  width: ${p => p.$w}px;
  height: 106px;
  color: ${p => (p.$active ? '#333' : '#666')};
  font-size: 45px;
  font-weight: ${p => (p.$active ? 700 : 400)};

  & > svg {
    margin-left: 9px;
  }

  &::after {
    content: '';
    display: ${p => (p.$active ? 'block' : 'none')};
    position: absolute;
    bottom: 1px;
    left: 20px;
    width: 39px;
    height: 10px;
    border-radius: 5px;
    background: #d4453d;
  }
`;

const Gear = styled.svg`
  margin: 27px 38px 0 auto;
`;

const LegendBar = styled.div`
  display: flex;
  height: 103px;
  padding: 10px 22px 0 20px;
`;

const Picker = styled.div`
  display: flex;
  align-items: center;
  justify-content: space-between;
  width: 125px;
  height: 55px;
  margin-top: 14px;
  padding: 0 12px 0 11px;
  border-radius: 8px;
  background: #f0f0f0;
  color: #333;
  font-size: 35px;
`;

const LegendItems = styled.div`
  flex: 1;
  padding-left: 15px;
`;

const LegendRow = styled.div`
  display: flex;
  align-items: center;
  height: 45px;
`;

const LegendText = styled.span<{ $color: string; $gap: number }>`
  margin-right: ${p => p.$gap}px;
  color: ${p => p.$color};
  font-size: 36px;
  font-weight: 500;
`;

const Adjust = styled.div`
  padding-top: 5px;
  color: #444;
  font-size: 35.500px;
`;

const KBox = styled.section`
  position: relative;
  height: 769px;
`;

const Plot = styled.svg`
  font-family: Roboto, 'Noto Sans CJK SC', sans-serif;
`;

const Controls = styled.div`
  display: flex;
  position: absolute;
  top: 679px;
  left: 22px;
  gap: 114px;
`;

const Control = styled.div`
  width: 80px;
  height: 80px;
  border-radius: 50%;
  background: rgba(228, 228, 228, 0.7);
`;

const Scribble = styled.svg`
  position: absolute;
  top: 0;
  left: 0;
`;

const AxisBox = styled.section`
  height: 86px;
  background:
    linear-gradient(to right, #fff 0, rgba(255, 255, 255, 0.9) 180px, rgba(255, 255, 255, 0) 420px, rgba(255, 255, 255, 0) 900px, #fff 1110px),
    linear-gradient(#eee, #f8f8f8 45%, #fafafa);
`;

const AxisRow = styled.div`
  display: flex;
  align-items: center;
  height: 60px;
  padding: 1px 0 0 13px;
`;

const AxisDate = styled.div<{ $w: number; $color: string }>`
  width: ${p => p.$w}px;
  padding-top: 21px;
  height: 64px;
  margin-top: -24px;
  color: ${p => p.$color};
  font-size: 38px;
  font-weight: 500;
`;

const LatestButton = styled.div`
  display: flex;
  align-items: center;
  justify-content: center;
  width: 65px;
  height: 70px;
  border-radius: 14px;
  background: #fff;
  box-shadow: 0 0 6px rgba(0, 0, 0, 0.12);
`;

const IndicatorBox = styled.section`
  display: flex;
  position: relative;
  height: 45px;
  margin: 0 13px;
  padding: 11px 0 0 12px;
  overflow: hidden;
  border: solid #ebebeb;
  border-width: 2px 2px 0;
`;

const IndicatorPicker = styled.div`
  display: flex;
  justify-content: space-between;
  width: 292px;
  height: 55px;
  padding: 5px 15px 0 12px;
  border-radius: 8px;
  background: #f0f0f0;
  color: #333;
  font-size: 39px;

  svg {
    margin-top: 12px;
  }
`;

const Help = styled.svg`
  margin: 5px 17px 0 8px;
`;

const IndicatorText = styled.span<{ $color: string; $gap: number }>`
  margin: 6px ${p => p.$gap}px 0 0;
  color: ${p => p.$color};
  font-size: 38px;
  font-weight: 500;
`;

const Fade = styled.div`
  position: absolute;
  right: 0;
  bottom: 0;
  left: 0;
  height: 18px;
  background: linear-gradient(rgba(0, 0, 0, 0), rgba(0, 0, 0, 0.15));
`;

const Sheet = styled.section`
  height: 758px;
  background: #fff;
`;

const SheetHead = styled.div`
  display: flex;
  align-items: center;
  height: 71px;
  padding: 5px 27px 0 16px;
`;

const SheetText = styled.span<{ $color: string; $gap: number }>`
  margin-right: ${p => p.$gap}px;
  color: ${p => p.$color};
  font-size: 34.500px;
`;

const SheetLabel = styled(SheetText)`
  font-size: 33px;
`;

const Close = styled.svg`
  margin-left: auto;
`;

const Pager = styled.div`
  display: flex;
  justify-content: space-between;
  padding: 34px 213px 0;
`;

const PageLink = styled.div`
  display: flex;
  align-items: center;
  gap: 21px;
  color: #333;
  font-size: 45px;

  span {
    margin-top: -2px;
  }
`;

const SystemBox = styled.footer`
  display: flex;
  align-items: center;
  justify-content: space-between;
  height: 131px;
  padding: 0 319px 0 317px;
  background: #252525;
`;

export default App;
